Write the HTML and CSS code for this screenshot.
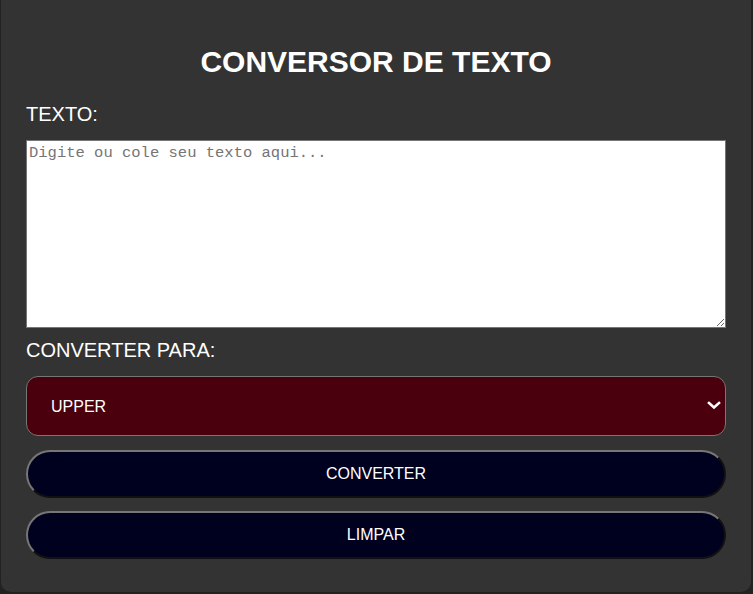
FILE: index.html
```html
<!DOCTYPE html>
<html lang="pt-BR">
<head>
<meta charset="utf-8">
<title>Conversor de Texto</title>
<link rel="stylesheet" href="styles.css">
</head>
<body>
<div class="container">
  <h1 class="title">CONVERSOR DE TEXTO</h1>
  <label class="label" for="texto">TEXTO:</label>
  <textarea id="texto" class="textarea" placeholder="Digite ou cole seu texto aqui..."></textarea>
  <label class="label label-select" for="tipo">CONVERTER PARA:</label>
  <div class="select-wrap">
    <select id="tipo" class="select">
      <option>UPPER</option>
      <option>lower</option>
    </select>
    <svg class="chevron" width="14" height="9" viewBox="0 0 14 9" aria-hidden="true">
      <path d="M2 2 L7 6.5 L12 2" fill="none" stroke="#ffffff" stroke-width="2.6" stroke-linecap="square"/>
    </svg>
  </div>
  <button class="btn btn-first" type="button">CONVERTER</button>
  <button class="btn btn-second" type="button">LIMPAR</button>
</div>
</body>
</html>
```
FILE: styles.css
```css
html, body {
  margin: 0;
  padding: 0;
}
body {
  background: #222222;
  font-family: "Liberation Sans", Arial, sans-serif;
  color: #ffffff;
}
.container {
  box-sizing: border-box;
  width: 750px;
  margin: -10px 0 0 1px;
  background: #333333;
  border-radius: 10px;
  padding: 25px 25px 33px;
  display: flex;
  flex-direction: column;
}
.title {
  margin: 29px 0 0;
  font-size: 30px;
  line-height: 35px;
  font-weight: bold;
  text-align: center;
}
.label {
  display: block;
  margin-top: 24px;
  font-size: 20px;
  line-height: 23px;
}
.label-select {
  margin-top: 11px;
}
.textarea {
  box-sizing: border-box;
  margin: 14px 0 0;
  width: 700px;
  height: 188px;
  border: 1px solid #767676;
  padding: 3px 2px 2px;
  font-family: "Liberation Mono", "DejaVu Sans Mono", monospace;
  font-size: 15.5px;
  background: #ffffff;
  color: #000000;
}
.textarea::placeholder {
  color: #757575;
}
.select-wrap {
  position: relative;
  margin-top: 14px;
  width: 700px;
  height: 60px;
}
.select {
  box-sizing: border-box;
  -webkit-appearance: none;
  appearance: none;
  height: 60px;
  width: 700px;
  padding: 0 24px;
  background: #4a000d;
  color: #ffffff;
  border: 1px solid #767676;
  border-radius: 12px;
  font-family: "Liberation Sans", Arial, sans-serif;
  font-size: 16px;
}
.chevron {
  position: absolute;
  right: 5px;
  top: 25px;
  pointer-events: none;
}
.btn {
  box-sizing: border-box;
  width: 700px;
  height: 48px;
  margin-top: 14px;
  background: #00001f;
  color: #ffffff;
  border-width: 2px;
  border-style: solid;
  border-color: #767676 #111111 #111111 #767676;
  border-radius: 25px;
  font-family: "Liberation Sans", Arial, sans-serif;
  font-size: 16px;
}
.btn-second {
  margin-top: 13px;
}
```
